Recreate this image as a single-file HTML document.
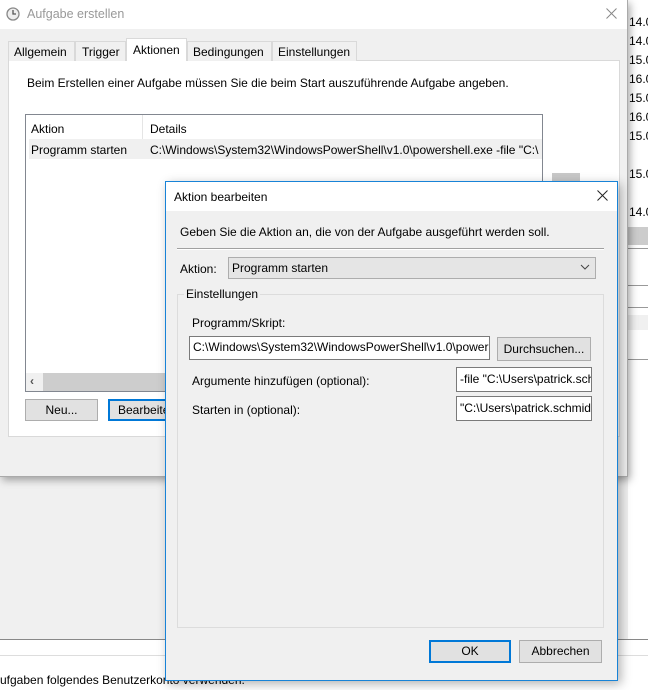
<!DOCTYPE html>
<html><head><meta charset="utf-8"><style>
*{box-sizing:border-box;margin:0;padding:0}
body{width:648px;height:690px;position:relative;overflow:hidden;background:#f0f0f0;font-family:"Liberation Sans",sans-serif;font-size:12px;color:#000}
.a{position:absolute}
.t{position:absolute;white-space:nowrap;font-size:12px}
.btn{position:absolute;background:#e1e1e1;border:1px solid #adadad;text-align:center;font-size:12px}
.inp{position:absolute;background:#fff;border:1px solid #7a7a7a;overflow:hidden;white-space:nowrap;padding:3px 0 0 3px;font-size:12px}
</style></head><body>
<!-- right background strip -->
<div class="a" style="left:628px;top:0;width:20px;height:640px;background:#fff"></div>
<div class="t" style="left:629px;top:13px;line-height:19px;font-size:12px">14.0<br>14.0<br>15.0<br>16.0<br>15.0<br>16.0<br>15.0<br><br>15.0<br><br>14.0</div>
<div class="a" style="left:628px;top:227px;width:20px;height:18px;background:#ccc"></div>
<div class="a" style="left:628px;top:248px;width:20px;height:1px;background:#999"></div>
<div class="a" style="left:628px;top:285px;width:20px;height:1px;background:#999"></div>
<div class="a" style="left:628px;top:307px;width:20px;height:1px;background:#999"></div>
<div class="a" style="left:628px;top:315px;width:20px;height:15px;background:#f0f0f0"></div>
<div class="a" style="left:628px;top:359px;width:20px;height:1px;background:#999"></div>
<!-- bottom area -->
<div class="a" style="left:0;top:639px;width:648px;height:1px;background:#888"></div>
<div class="a" style="left:0;top:640px;width:648px;height:50px;background:#fff"></div>
<div class="a" style="left:0;top:655px;width:648px;height:1px;background:#ddd"></div>
<div class="t" style="left:0;top:673px">ufgaben folgendes Benutzerkonto verwenden.</div>

<!-- main window -->
<div class="a" style="left:0;top:0;width:628px;height:477px;background:#f0f0f0;box-shadow:2px 3px 8px rgba(0,0,0,.35);border-right:1px solid #aaa;border-bottom:1px solid #aaa"></div>
<div class="a" style="left:0;top:0;width:627px;height:29px;background:#fff"></div>
<svg class="a" style="left:6px;top:7px" width="14" height="14"><circle cx="7" cy="7" r="6" fill="#eee" stroke="#888" stroke-width="1.3"/><path d="M7 3V7H10" stroke="#555" stroke-width="1.3" fill="none"/></svg>
<div class="t" style="left:27px;top:7px;font-size:12.5px;color:#999">Aufgabe erstellen</div>
<svg class="a" style="left:606px;top:8px" width="11" height="11"><path d="M0.5 0.5L10.5 10.5M10.5 0.5L0.5 10.5" stroke="#888" stroke-width="1"/></svg>
<!-- tabs -->
<div class="a" style="left:8px;top:60px;width:612px;height:377px;background:#fff;border:1px solid #d9d9d9"></div>
<div class="a" style="left:8px;top:41px;width:67px;height:20px;border:1px solid #d9d9d9;border-bottom:none;background:#f0f0f0"></div>
<div class="t" style="left:14px;top:45px">Allgemein</div>
<div class="a" style="left:75px;top:41px;width:51px;height:20px;border:1px solid #d9d9d9;border-bottom:none;background:#f0f0f0"></div>
<div class="t" style="left:82px;top:45px">Trigger</div>
<div class="a" style="left:126px;top:38px;width:61px;height:23px;border:1px solid #d9d9d9;border-bottom:none;background:#fff"></div>
<div class="t" style="left:133px;top:43px">Aktionen</div>
<div class="a" style="left:187px;top:41px;width:85px;height:20px;border:1px solid #d9d9d9;border-bottom:none;background:#f0f0f0"></div>
<div class="t" style="left:193px;top:45px">Bedingungen</div>
<div class="a" style="left:272px;top:41px;width:85px;height:20px;border:1px solid #d9d9d9;border-bottom:none;background:#f0f0f0"></div>
<div class="t" style="left:278px;top:45px">Einstellungen</div>
<div class="t" style="left:27px;top:76px">Beim Erstellen einer Aufgabe müssen Sie die beim Start auszuführende Aufgabe angeben.</div>
<!-- list -->
<div class="a" style="left:25px;top:114px;width:518px;height:278px;border:1px solid #828790;background:#fff;overflow:hidden">
 <div class="a" style="left:116px;top:0;width:1px;height:24px;background:#e5e5e5"></div>
 <div class="t" style="left:5px;top:7px">Aktion</div>
 <div class="t" style="left:124px;top:7px">Details</div>
 <div class="a" style="left:3px;top:24px;width:514px;height:20px;background:#f0f0f0"></div>
 <div class="t" style="left:5px;top:28px">Programm starten</div>
 <div class="t" style="left:124px;top:28px">C:\Windows\System32\WindowsPowerShell\v1.0\powershell.exe -file "C:\</div>
 <div class="a" style="left:0;top:258px;width:517px;height:18px;background:#cdcdcd"></div>
 <div class="a" style="left:0;top:258px;width:17px;height:18px;background:#f0f0f0"></div>
 <div class="t" style="left:4px;top:259px;font-weight:bold;color:#555">‹</div>
</div>
<div class="a" style="left:552px;top:173px;width:28px;height:10px;background:#c8c8c8"></div>
<div class="btn" style="left:25px;top:399px;width:73px;height:22px;line-height:20px">Neu...</div>
<div class="btn" style="left:108px;top:399px;width:70px;height:22px;line-height:18px;border:2px solid #0078d7;text-align:left;padding-left:8px;overflow:hidden">Bearbeiten</div>

<!-- dialog -->
<div class="a" style="left:165px;top:181px;width:453px;height:500px;background:#f0f0f0;border:1px solid #1883d7;box-shadow:3px 3px 10px rgba(0,0,0,.3)"></div>
<div class="a" style="left:166px;top:182px;width:451px;height:29px;background:#fff"></div>
<div class="t" style="left:174px;top:190px">Aktion bearbeiten</div>
<svg class="a" style="left:597px;top:190px" width="11" height="11"><path d="M0.5 0.5L10.5 10.5M10.5 0.5L0.5 10.5" stroke="#222" stroke-width="1"/></svg>
<div class="t" style="left:180px;top:225px">Geben Sie die Aktion an, die von der Aufgabe ausgeführt werden soll.</div>
<div class="a" style="left:177px;top:248px;width:427px;height:2px;border-top:1px solid #a0a0a0;border-bottom:1px solid #fff"></div>
<div class="t" style="left:180px;top:262px">Aktion:</div>
<div class="a" style="left:228px;top:257px;width:368px;height:22px;background:#e5e5e5;border:1px solid #adadad"></div>
<div class="t" style="left:232px;top:261px">Programm starten</div>
<svg class="a" style="left:580px;top:264px" width="10" height="7"><path d="M1 1L5 5L9 1" stroke="#444" fill="none"/></svg>
<div class="a" style="left:177px;top:294px;width:427px;height:334px;border:1px solid #dcdcdc"></div>
<div class="t" style="left:184px;top:287px;background:#f0f0f0;padding:0 2px">Einstellungen</div>
<div class="t" style="left:192px;top:316px">Programm/Skript:</div>
<div class="inp" style="left:189px;top:336px;width:301px;height:24px">C:\Windows\System32\WindowsPowerShell\v1.0\powershell.exe</div>
<div class="btn" style="left:497px;top:337px;width:94px;height:24px;line-height:22px">Durchsuchen...</div>
<div class="t" style="left:192px;top:374px">Argumente hinzufügen (optional):</div>
<div class="inp" style="left:456px;top:367px;width:136px;height:25px;padding-top:4px">-file "C:\Users\patrick.schmidt</div>
<div class="t" style="left:192px;top:403px">Starten in (optional):</div>
<div class="inp" style="left:456px;top:396px;width:136px;height:25px;padding-top:4px">"C:\Users\patrick.schmidt"</div>
<div class="btn" style="left:429px;top:640px;width:82px;height:23px;line-height:19px;border:2px solid #0078d7">OK</div>
<div class="btn" style="left:519px;top:640px;width:83px;height:23px;line-height:21px">Abbrechen</div>
</body></html>
